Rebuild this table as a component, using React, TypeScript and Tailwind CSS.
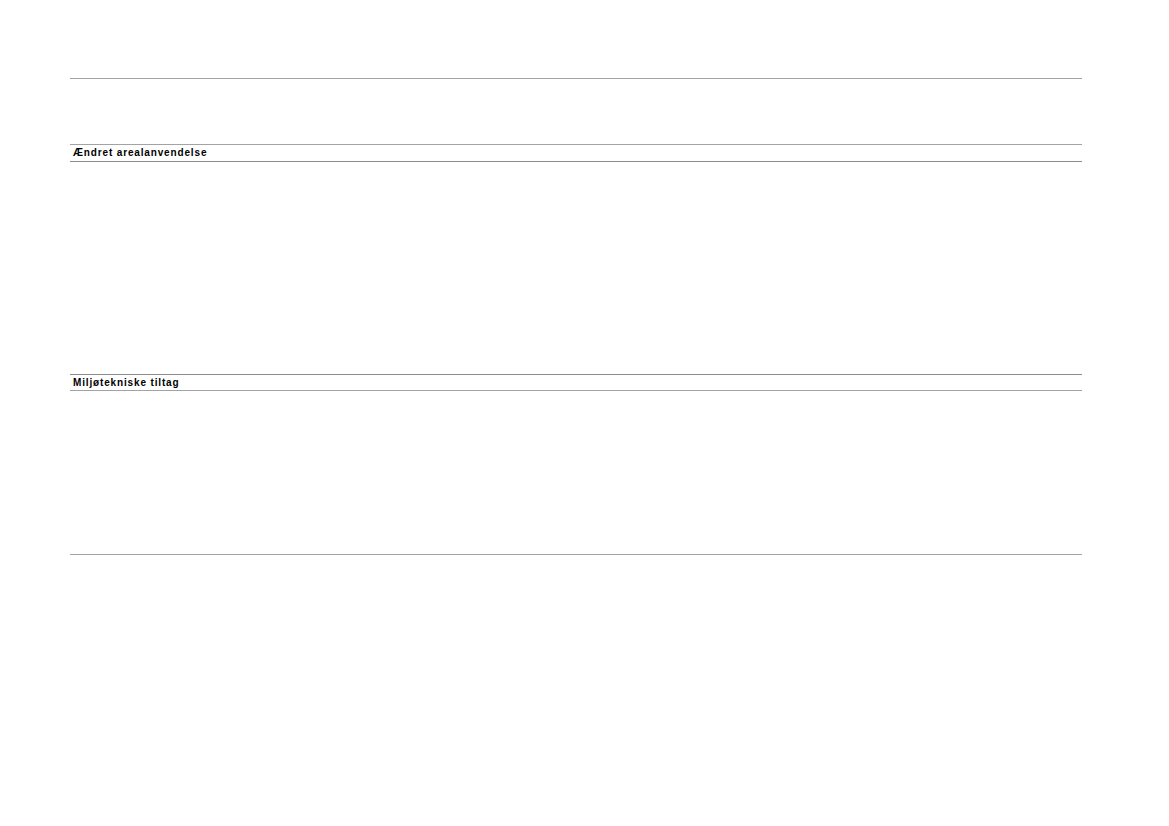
import React from "react";

const cols = "grid grid-cols-[207px_56px_98px_99px_98px_99px_98px_55px_64px_59px_79px]";
const N = 11;

function Row({ h, label, top = true, bottom = false, dark = false }: { h: string; label?: string; top?: boolean; bottom?: boolean; dark?: boolean }) {
  const c = dark ? "border-[#8c8c8c]" : "border-[#a3a3a3]";
  return (
    <div className={`${cols} ${h} ${top ? "border-t" : ""} ${bottom ? "border-b" : ""} ${c}`}>
      {Array.from({ length: N }).map((_, i) => (
        <div key={i} className="flex items-center pl-[3px] overflow-visible whitespace-nowrap">
          {i === 0 && label ? (
            <span className="text-[10px] font-bold text-black tracking-[0.85px] leading-none" style={{ fontFamily: '"Liberation Sans", Arial, sans-serif' }}>
              {label}
            </span>
          ) : null}
        </div>
      ))}
    </div>
  );
}

export default function App() {
  return (
    <div className="w-[1169px] h-[826px] bg-white" style={{ fontFamily: '"Liberation Sans", Arial, sans-serif' }}>
      <div className="pt-[78px] pl-[70px]">
        <div className="w-[1012px] flex flex-col">
          <Row h="h-[66px]" />
          <Row h="h-[17px]" label="Ændret arealanvendelse" />
          <Row h="h-[213px]" dark />
          <Row h="h-[16px]" label="Miljøtekniske tiltag" dark />
          <Row h="h-[165px]" bottom />
        </div>
      </div>
    </div>
  );
}
